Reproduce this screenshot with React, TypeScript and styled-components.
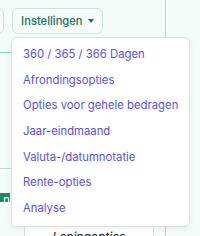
import React from 'react';
import styled, { createGlobalStyle } from 'styled-components';

const GlobalStyle = createGlobalStyle`
  html, body {
    margin: 0;
    padding: 0;
    background: #f4fbf8;
    font-family: Inter, "Noto Sans", sans-serif;
    overflow: hidden;
  }
`;

const Page = styled.div`
  position: relative;
  width: 200px;
  height: 236px;
  display: flex;
`;

const Main = styled.div`
  width: 165px;
  border-right: 1px solid #a6dcc6;
  display: flex;
  flex-direction: column;
`;

const Toolbar = styled.div`
  display: flex;
  gap: 8px;
  padding-top: 8px;
  margin-left: -50px;
`;

const ToolButton = styled.button`
  height: 26px;
  box-sizing: border-box;
  padding: 0 8px 0 8px;
  border: 1px solid #cfe3dc;
  border-radius: 6px;
  background: #f6fcfa;
  color: #22725c;
  font-family: Inter, sans-serif;
  font-size: 11.2px;
  font-weight: 500;
  display: flex;
  align-items: center;
  gap: 5px;
  white-space: nowrap;
`;

const Caret = styled.span`
  width: 0;
  height: 0;
  border-left: 3px solid transparent;
  border-right: 3px solid transparent;
  border-top: 4px solid #22725c;
`;

const Rule = styled.div<{ $color: string; $top: number }>`
  margin-top: ${p => p.$top}px;
  width: 12px;
  height: 1px;
  background: ${p => p.$color};
`;

const GreenButton = styled.div`
  margin-top: 25px;
  width: 10px;
  height: 14px;
  background: #1b8a62;
  color: #fff;
  font-size: 12px;
  line-height: 14px;
  text-decoration: underline;
  overflow: hidden;
  direction: rtl;
`;

const SectionBox = styled.div`
  margin-top: 19px;
  margin-left: 24px;
  width: 130px;
  height: 20px;
  box-sizing: border-box;
  padding-top: 5px;
  border: 1px solid #d9dedd;
  border-bottom: none;
  background: #fdfefe;
  text-align: center;
  font-style: italic;
  font-size: 12px;
  line-height: 20px;
  color: #222;
  overflow: hidden;
`;

const Menu = styled.div`
  position: absolute;
  left: 11px;
  top: 37px;
  width: 179px;
  height: 190px;
  box-sizing: border-box;
  background: #fff;
  border: 1px solid #dde2e1;
  border-radius: 6px;
  box-shadow: 0 2px 6px rgba(0, 0, 0, 0.06);
  padding-top: 3px;
`;

const MenuItem = styled.div`
  height: 25.7px;
  padding-left: 11px;
  display: flex;
  align-items: center;
  color: #5a50d6;
  font-size: 11.3px;
  white-space: nowrap;
`;

const items = [
  '360 / 365 / 366 Dagen',
  'Afrondingsopties',
  'Opties voor gehele bedragen',
  'Jaar-eindmaand',
  'Valuta-/datumnotatie',
  'Rente-opties',
  'Analyse'
];

export default function App() {
  return (
    <>
      <GlobalStyle />
      <Page>
        <Main>
          <Toolbar>
            <ToolButton>Lening</ToolButton>
            <ToolButton>Instellingen <Caret /></ToolButton>
          </Toolbar>
          <Rule $color="#8fd3b5" $top={18} />
          <Rule $color="#c9d6d2" $top={115} />
          <GreenButton>n</GreenButton>
          <SectionBox>Leningopties</SectionBox>
        </Main>
        <Menu>
          { items.map((item, i) => <MenuItem key={ i }>{ item }</MenuItem>) }
        </Menu>
      </Page>
    </>
  );
}
